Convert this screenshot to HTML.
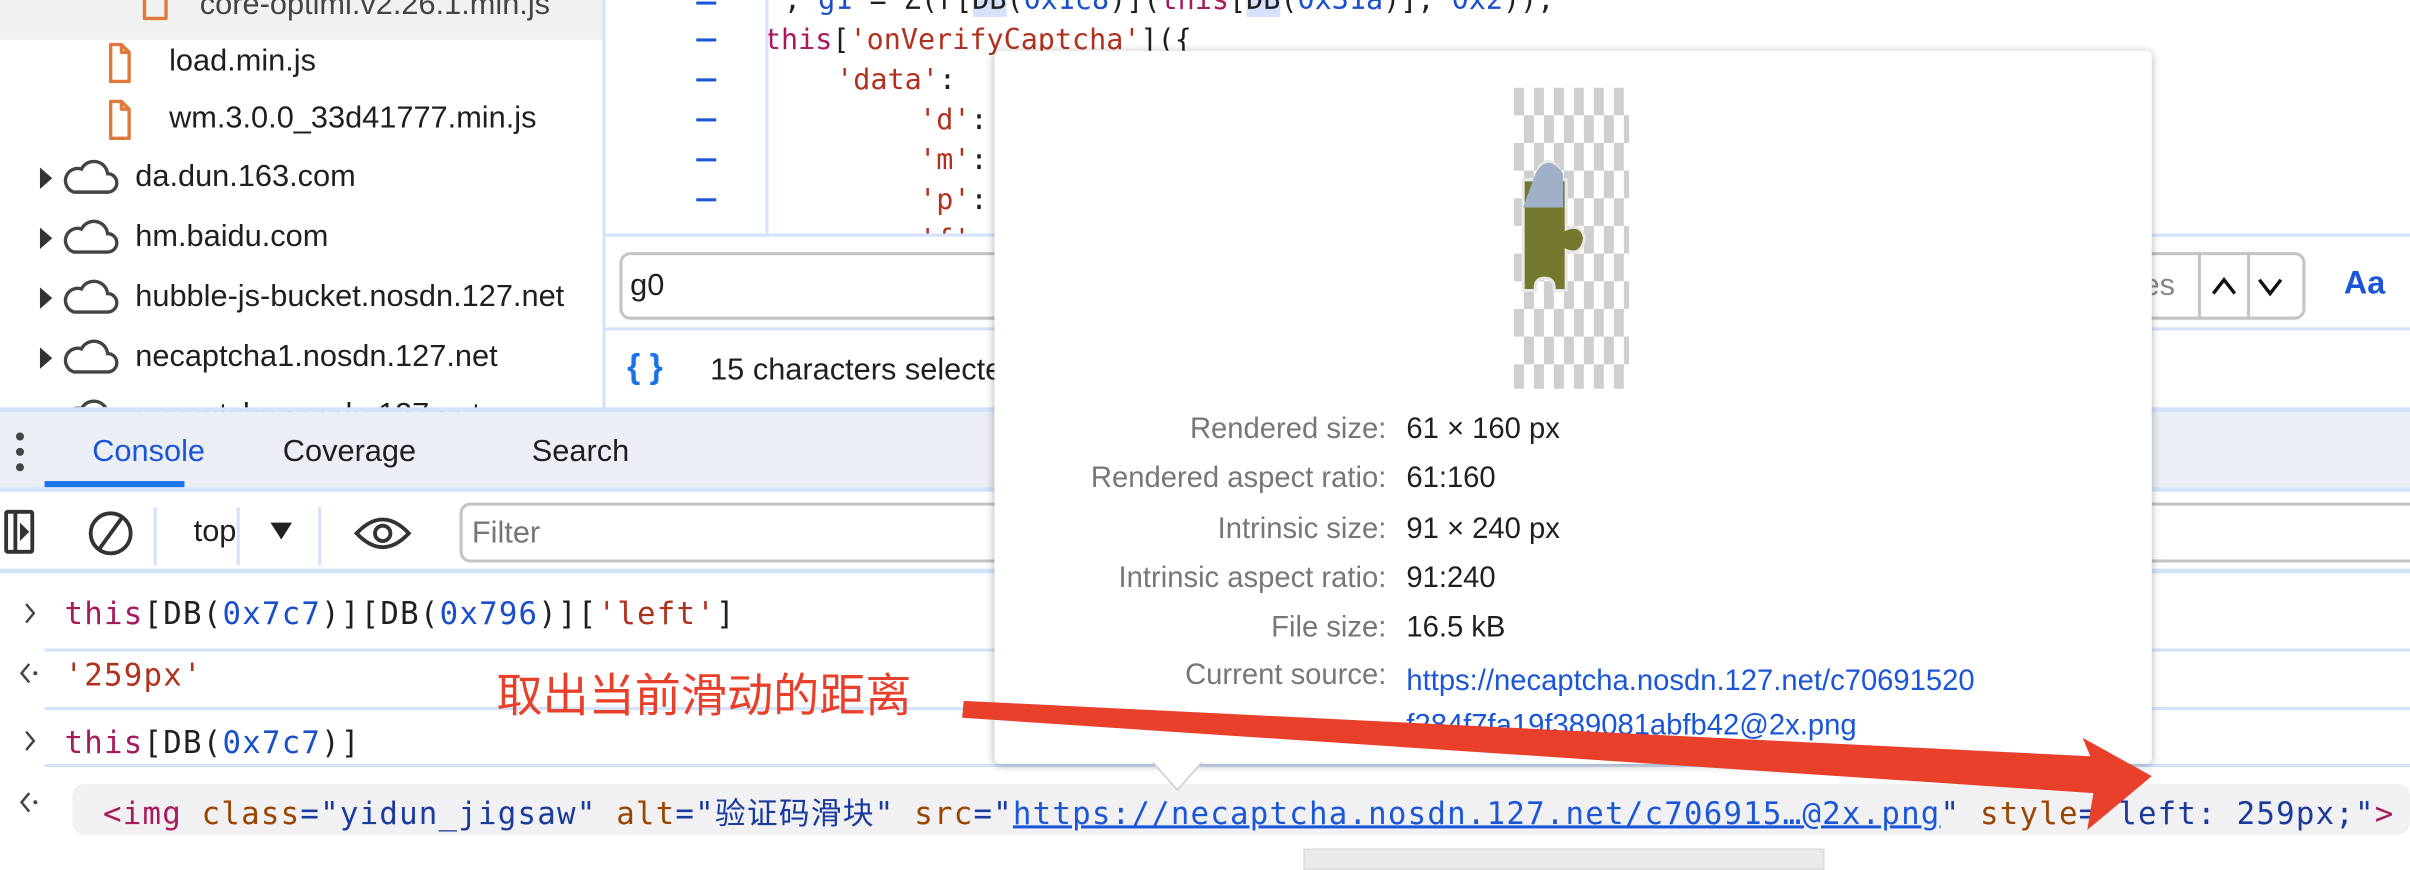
<!DOCTYPE html>
<html><head><meta charset="utf-8"><style>
html,body{margin:0;padding:0;width:2410px;height:862px;overflow:hidden;background:#fff}
#w{position:absolute;left:0;top:0;width:1568px;height:561px;transform:scale(1.53699);transform-origin:0 0;font-family:"Liberation Sans","Noto Sans CJK SC",sans-serif;color:#1f1f1f}
.a{position:absolute;white-space:nowrap}
.m{font-family:"DejaVu Sans Mono","Liberation Mono","Noto Sans CJK SC",monospace}
.cm{font-size:20px;letter-spacing:0.8px}
.t{font-size:20px}
.dash{position:absolute;left:453px;width:13px;height:2px;background:#1a56d6}
.kw{color:#a8195d}.st{color:#b0321e}.nu{color:#1a4fc9}.at{color:#994500}.hl{background:#d6e2fb}
.lbl{position:absolute;left:0;width:255px;text-align:right;color:#777;font-size:19px}
.val{position:absolute;left:268px;font-size:19px;color:#1f1f1f;white-space:nowrap}
</style></head><body><div id="w">
<!-- left tree -->
<div class="a" style="left:0;top:0;width:392px;height:26px;background:#f1f1f1"></div>
<svg class="a" style="left:0;top:0" width="392" height="265">
<g fill="none" stroke="#e07a3c" stroke-width="2.2" stroke-linejoin="round">
<path d="M94 -8 v20 h14 v-20"/>
<path d="M72 29 h7 l5 5 v19 h-12z M79 29 v5 h5"/>
<path d="M72 66 h7 l5 5 v19 h-12z M79 66 v5 h5"/>
</g>
<g fill="none" stroke="#444" stroke-width="2.2">
<path d="M48 125 h22 a6 6 0 0 0 0-12 a9 9 0 0 0-17-3 a7 7 0 0 0-5 15z"/>
<path d="M48 164 h22 a6 6 0 0 0 0-12 a9 9 0 0 0-17-3 a7 7 0 0 0-5 15z"/>
<path d="M48 203 h22 a6 6 0 0 0 0-12 a9 9 0 0 0-17-3 a7 7 0 0 0-5 15z"/>
<path d="M48 242 h22 a6 6 0 0 0 0-12 a9 9 0 0 0-17-3 a7 7 0 0 0-5 15z"/>
<path d="M48 281 h22 a6 6 0 0 0 0-12 a9 9 0 0 0-17-3 a7 7 0 0 0-5 15z"/>
</g>
<g fill="#333"><path d="M26 109 l8 7 -8 7z"/><path d="M26 148 l8 7 -8 7z"/><path d="M26 187 l8 7 -8 7z"/><path d="M26 226 l8 7 -8 7z"/><path d="M26 265 l8 7 -8 7z"/></g>
</svg>
<div class="a t" style="left:130px;top:-8px;color:#444">core-optiml.v2.26.1.min.js</div>
<div class="a t" style="left:110px;top:29px">load.min.js</div>
<div class="a t" style="left:110px;top:66px">wm.3.0.0_33d41777.min.js</div>
<div class="a t" style="left:88px;top:104px">da.dun.163.com</div>
<div class="a t" style="left:88px;top:143px">hm.baidu.com</div>
<div class="a t" style="left:88px;top:182px;width:303px;overflow:hidden">hubble-js-bucket.nosdn.127.net</div>
<div class="a t" style="left:88px;top:221px">necaptcha1.nosdn.127.net</div>
<div class="a t" style="left:88px;top:259px">necaptcha.nosdn.127.net</div>
<div class="a" style="left:392px;top:0;width:2px;height:267px;background:#d3e3fd"></div>
<!-- code -->
<div class="a" style="left:498px;top:0;width:2px;height:152px;background:#d3e3fd"></div>
<div class="dash" style="top:1px"></div><div class="dash" style="top:25px"></div><div class="dash" style="top:51px"></div><div class="dash" style="top:77px"></div><div class="dash" style="top:103px"></div><div class="dash" style="top:129px"></div>
<div class="a m" style="left:500px;top:0;width:1068px;height:152px;overflow:hidden;font-size:18.5px;line-height:26px">
<div style="position:absolute;top:-12px;left:10px;white-space:pre">, <span class="nu">g1</span> = Z(r[<span class="hl">DB</span>(<span class="nu">0x1c8</span>)](<span class="kw">this</span>[<span class="hl">DB</span>(<span class="nu">0x31a</span>)], <span class="nu">0x2</span>)),</div>
<div style="position:absolute;top:14px;left:-3px;white-space:pre"><span class="kw">this</span>[<span class="st">'onVerifyCaptcha'</span>]({</div>
<div style="position:absolute;top:40px;left:44px;white-space:pre"><span class="st">'data'</span>:</div>
<div style="position:absolute;top:66px;left:98px;white-space:pre"><span class="st">'d'</span>:</div>
<div style="position:absolute;top:92px;left:98px;white-space:pre"><span class="st">'m'</span>:</div>
<div style="position:absolute;top:118px;left:98px;white-space:pre"><span class="st">'p'</span>:</div>
<div style="position:absolute;top:144px;left:98px;white-space:pre"><span class="st">'f'</span>:</div>
</div>
<div class="a" style="left:394px;top:152px;width:1174px;height:2px;background:#d3e3fd"></div>
<div class="a" style="left:403px;top:164px;width:1097px;height:44px;border:2px solid #c4c4c4;border-radius:7px;box-sizing:border-box"></div>
<div class="a t" style="left:410px;top:175px">g0</div>
<div class="a" style="left:1430px;top:164px;width:2px;height:44px;background:#c4c4c4"></div>
<div class="a" style="left:1462px;top:164px;width:2px;height:44px;background:#c4c4c4"></div>
<div class="a" style="left:1394px;top:175px;color:#888;font-size:20px">es</div>
<svg class="a" style="left:1430px;top:164px" width="70" height="44"><path d="M10 27 l7-9 7 9 M40 18 l7 9 7-9" fill="none" stroke="#111" stroke-width="2.2"/></svg>
<div class="a" style="left:1525px;top:173px;color:#1a56d6;font-weight:bold;font-size:21px">Aa</div>
<div class="a" style="left:394px;top:213px;width:1174px;height:2px;background:#d3e3fd"></div>
<div class="a" style="left:408px;top:226px;color:#1a73e8;font-weight:bold;font-size:22px">{ }</div>
<div class="a t" style="left:462px;top:230px">15 characters selected</div>
<!-- tabs -->
<div class="a" style="left:0;top:265px;width:1568px;height:3px;background:#d3e3fd"></div>
<div class="a" style="left:0;top:268px;width:1568px;height:49px;background:#eceef5"></div>
<svg class="a" style="left:6px;top:278px" width="16" height="34"><circle cx="7" cy="6" r="2.6" fill="#444"/><circle cx="7" cy="16" r="2.6" fill="#444"/><circle cx="7" cy="26" r="2.6" fill="#444"/></svg>
<div class="a t" style="left:60px;top:283px;color:#1a56d6">Console</div>
<div class="a t" style="left:184px;top:283px">Coverage</div>
<div class="a t" style="left:346px;top:283px">Search</div>
<div class="a" style="left:29px;top:313px;width:91px;height:4px;background:#1a73e8"></div>
<div class="a" style="left:0;top:317px;width:1568px;height:3px;background:#d3e3fd"></div>
<!-- toolbar -->
<svg class="a" style="left:0;top:328px" width="300" height="40">
<g fill="none" stroke="#333" stroke-width="2.5"><rect x="4" y="5" width="17" height="26" rx="1"/><line x1="10" y1="5" x2="10" y2="31"/><circle cx="72" cy="19" r="13"/><line x1="64" y1="30" x2="80" y2="8"/></g>
<path d="M13 12 l6 6 -6 6z" fill="#333"/>
<path d="M232 19 q17 -18 34 0 q-17 18 -34 0z" fill="none" stroke="#333" stroke-width="2.5"/><circle cx="249" cy="19" r="5" fill="none" stroke="#333" stroke-width="2.5"/>
<g fill="#d3e3fd"><rect x="100" y="2" width="2" height="38"/><rect x="154" y="2" width="2" height="38"/><rect x="207" y="2" width="2" height="38"/></g>
</svg>
<div class="a t" style="left:126px;top:335px">top</div>
<div class="a" style="left:176px;top:340px;border-top:11px solid #222;border-left:7px solid transparent;border-right:7px solid transparent"></div>
<div class="a" style="left:299px;top:327px;width:1290px;height:39px;border:2px solid #c4c4c4;border-radius:7px;box-sizing:border-box"></div>
<div class="a t" style="left:307px;top:336px;color:#777">Filter</div>
<div class="a" style="left:0;top:370px;width:1568px;height:3px;background:#d3e3fd"></div>
<!-- console -->
<svg class="a" style="left:0;top:380px" width="30" height="160"><g fill="none" stroke="#444" stroke-width="1.6"><path d="M17 13 l5 6 -5 6"/><path d="M19 52 l-5 6 5 6"/><path d="M17 96 l5 6 -5 6"/><path d="M19 136 l-5 6 5 6"/></g><circle cx="23" cy="58" r="1.3" fill="#444"/><circle cx="23" cy="142" r="1.3" fill="#444"/></svg>
<div class="a m cm" style="left:42px;top:387px;white-space:pre"><span class="kw">this</span>[DB(<span class="nu">0x7c7</span>)][DB(<span class="nu">0x796</span>)][<span class="st">'left'</span>]</div>
<div class="a" style="left:29px;top:422px;width:1540px;height:2px;background:#d3e3fd"></div>
<div class="a m cm st" style="left:42px;top:427px">'259px'</div>
<div class="a" style="left:29px;top:460px;width:1540px;height:2px;background:#d3e3fd"></div>
<div class="a m cm" style="left:42px;top:471px;white-space:pre"><span class="kw">this</span>[DB(<span class="nu">0x7c7</span>)]</div>
<div class="a" style="left:29px;top:497px;width:1540px;height:2px;background:#d3e3fd"></div>
<div class="a" style="left:47px;top:510px;width:1521px;height:33px;background:#f1f1f3;border-radius:8px"></div>
<div class="a m cm" style="left:67px;top:513px;white-space:pre;color:#1a3a9c"><span style="color:#a8195d">&lt;img</span> <span class="at">class</span>="yidun_jigsaw" <span class="at">alt</span>="验证码滑块" <span class="at">src</span>="<span style="color:#1a56d6;text-decoration:underline">https://necaptcha.nosdn.127.net/c706915…@2x.png</span>" <span class="at">style</span>="left: 259px;"<span style="color:#a8195d">&gt;</span></div>
<div class="a" style="left:848px;top:552px;width:337px;height:12px;background:#eceae8;border:1px solid #ddd"></div>
<!-- annotation -->
<div class="a" style="left:323px;top:428px;font-size:30px;color:#e8402a;font-family:'Noto Sans CJK SC',sans-serif">取出当前滑动的距离</div>
<!-- popup -->
<div class="a" style="left:647px;top:33px;width:753px;height:464px;background:#fff;border-radius:4px;box-shadow:0 1px 6px rgba(0,0,0,.3)">
<svg style="position:absolute;left:338px;top:24px" width="75" height="196">
<defs><pattern id="c" width="13" height="36" patternUnits="userSpaceOnUse"><rect width="13" height="36" fill="#fff"/><rect width="6.5" height="18" fill="#cfcfcf"/><rect x="6.5" y="18" width="6.5" height="18" fill="#cfcfcf"/></pattern></defs>
<rect width="75" height="196" fill="url(#c)"/>
<path d="M6 60 h10 q-2-10 6-12 q9 2 8 12 h4 v32 q10-4 12 6 q-2 12-12 8 v26 h-8 q1-8-6-8 q-7 0-6 8 h-8z" fill="#73782e" stroke="#e8e8e8" stroke-width="2"/>
<path d="M14 56 q8-14 18 0 v22 h-26z" fill="#9fb0c8"/>
</svg>
<div class="lbl" style="top:236px">Rendered size:</div><div class="val" style="top:236px">61 × 160 px</div>
<div class="lbl" style="top:268px">Rendered aspect ratio:</div><div class="val" style="top:268px">61:160</div>
<div class="lbl" style="top:301px">Intrinsic size:</div><div class="val" style="top:301px">91 × 240 px</div>
<div class="lbl" style="top:333px">Intrinsic aspect ratio:</div><div class="val" style="top:333px">91:240</div>
<div class="lbl" style="top:365px">File size:</div><div class="val" style="top:365px">16.5 kB</div>
<div class="lbl" style="top:396px">Current source:</div><div class="val" style="top:396px;color:#1a56d6;line-height:29px">https://necaptcha.nosdn.127.net/c70691520<br>f284f7fa19f389081abfb42@2x.png</div>
</div>
<svg class="a" style="left:750px;top:496px" width="34" height="20"><path d="M0 0 L16 18 L32 0z" fill="#fff"/><path d="M0 0 L16 18 L32 0" fill="none" stroke="#ccc" stroke-width="1"/></svg>
<!-- arrow -->
<svg class="a" style="left:0;top:0" width="1568" height="561"><path d="M627 456 L1360 492 L1355 480 L1400 505 L1358 540 L1362 516 L626 467z" fill="#e8402a"/></svg>
</div></body></html>
